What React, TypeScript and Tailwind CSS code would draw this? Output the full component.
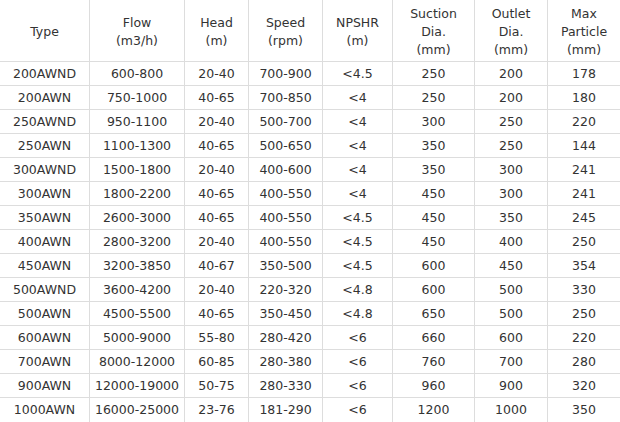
const headers: string[][] = [
  ["Type"],
  ["Flow", "(m3/h)"],
  ["Head", "(m)"],
  ["Speed", "(rpm)"],
  ["NPSHR", "(m)"],
  ["Suction", "Dia.", "(mm)"],
  ["Outlet", "Dia.", "(mm)"],
  ["Max", "Particle", "(mm)"],
];

const rows: string[][] = [
  ["200AWND", "600-800", "20-40", "700-900", "<4.5", "250", "200", "178"],
  ["200AWN", "750-1000", "40-65", "700-850", "<4", "250", "200", "180"],
  ["250AWND", "950-1100", "20-40", "500-700", "<4", "300", "250", "220"],
  ["250AWN", "1100-1300", "40-65", "500-650", "<4", "350", "250", "144"],
  ["300AWND", "1500-1800", "20-40", "400-600", "<4", "350", "300", "241"],
  ["300AWN", "1800-2200", "40-65", "400-550", "<4", "450", "300", "241"],
  ["350AWN", "2600-3000", "40-65", "400-550", "<4.5", "450", "350", "245"],
  ["400AWN", "2800-3200", "20-40", "400-550", "<4.5", "450", "400", "250"],
  ["450AWN", "3200-3850", "40-67", "350-500", "<4.5", "600", "450", "354"],
  ["500AWND", "3600-4200", "20-40", "220-320", "<4.8", "600", "500", "330"],
  ["500AWN", "4500-5500", "40-65", "350-450", "<4.8", "650", "500", "250"],
  ["600AWN", "5000-9000", "55-80", "280-420", "<6", "660", "600", "220"],
  ["700AWN", "8000-12000", "60-85", "280-380", "<6", "760", "700", "280"],
  ["900AWN", "12000-19000", "50-75", "280-330", "<6", "960", "900", "320"],
  ["1000AWN", "16000-25000", "23-76", "181-290", "<6", "1200", "1000", "350"],
];

const gridCols = "grid grid-cols-[90px_95px_64px_74px_70px_82px_73px_72px]";

export default function App() {
  return (
    <div
      className="w-[620px] h-[422px] overflow-hidden bg-white text-[#333] text-[12.5px] leading-[18px]"
      style={{ fontFamily: '"DejaVu Sans", Verdana, sans-serif' }}
    >
      <div className={`${gridCols} h-[62px] border-b border-[#dddddd]`}>
        {headers.map((h, i) => (
          <div
            key={i}
            className={`flex flex-col items-center justify-center pt-[2px] text-center ${
              i < 7 ? "border-r border-[#dddddd]" : ""
            }`}
          >
            {h.map((line) => (
              <span key={line}>{line}</span>
            ))}
          </div>
        ))}
      </div>
      {rows.map((r, ri) => (
        <div
          key={r[0]}
          className={`${gridCols} h-[24px] ${
            ri < rows.length - 1 ? "border-b border-[#dddddd]" : ""
          }`}
        >
          {r.map((c, ci) => (
            <div
              key={ci}
              className={`flex items-center justify-center ${
                ci < 7 ? "border-r border-[#dddddd]" : ""
              }`}
            >
              {c}
            </div>
          ))}
        </div>
      ))}
    </div>
  );
}
